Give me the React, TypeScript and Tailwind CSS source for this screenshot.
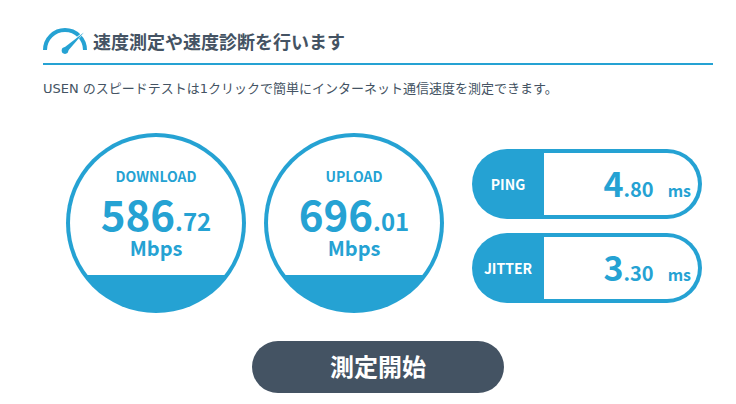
type Reading = { label: string; whole: string; fraction: string };

const speeds: Reading[] = [
  { label: 'DOWNLOAD', whole: '586', fraction: '.72' },
  { label: 'UPLOAD', whole: '696', fraction: '.01' },
];

const delays: Reading[] = [
  { label: 'PING', whole: '4', fraction: '.80' },
  { label: 'JITTER', whole: '3', fraction: '.30' },
];

function GaugeIcon() {
  return (
    <svg width="44" height="26" viewBox="0 0 44 26" aria-hidden="true" className="shrink-0">
      <path d="M2 22 A20 20 0 0 1 42 22" fill="none" stroke="#25a2d3" strokeWidth="4" />
      <path d="M20.4 20.8 L40.6 4.4 L23.8 24 Z" fill="#fff" stroke="#fff" strokeWidth="1.4" />
      <path d="M20 20.6 L40.8 4.6 L24 24 Z" fill="#25a2d3" />
      <circle cx="22" cy="22.6" r="3.3" fill="#25a2d3" />
    </svg>
  );
}

function SpeedDial({ label, whole, fraction }: Reading) {
  return (
    <section className="size-[180px] shrink-0 rounded-full bg-[#25a2d3] p-1 text-center">
      <div className="h-full overflow-hidden rounded-full">
        <div className="h-[138px] bg-white pt-[27px]">
          <h2 className="text-[14px] leading-6">{label}</h2>
          <p className="text-[42px] leading-[50px]">
            {whole}
            <span className="text-[24px] leading-none">{fraction}</span>
          </p>
          <p className="text-[20px] leading-5">Mbps</p>
        </div>
      </div>
    </section>
  );
}

function DelayPill({ label, whole, fraction }: Reading) {
  return (
    <section className="flex h-[70px] rounded-full bg-[#25a2d3] py-1 pr-1">
      <h2 className="flex w-[72px] shrink-0 items-center justify-center text-[14px] text-white">
        {label}
      </h2>
      <p className="flex flex-1 items-baseline justify-end rounded-r-full bg-white pt-[10px] pr-[7px] text-[34px] leading-10">
        {whole}
        <span className="text-[20px] leading-none">{fraction}</span>
        <span className="ml-[14px] text-[16px] leading-none">ms</span>
      </p>
    </section>
  );
}

export default function App() {
  return (
    <main className="bg-white pt-7 pr-[23px] pb-[11px] pl-[43px] font-['DejaVu_Sans','Noto_Sans_CJK_JP',sans-serif] text-[#445363]">
      <header className="flex h-[37px] items-start gap-[6px] border-b-2 border-[#25a2d3]">
        <GaugeIcon />
        <h1 className="text-[18px] leading-[30px] font-bold">速度測定や速度診断を行います</h1>
      </header>
      <p className="mt-3 text-[13px] leading-6">
        USEN のスピードテストは1クリックで簡単にインターネット通信速度を測定できます。
      </p>
      <div className="mt-8 flex justify-center gap-7 pl-3 font-['Noto_Sans_CJK_JP',sans-serif] font-bold text-[#25a2d3]">
        <div className="flex gap-[18px]">
          {speeds.map((s) => (
            <SpeedDial key={s.label} {...s} />
          ))}
        </div>
        <div className="flex w-[230px] flex-col gap-[14px] pt-4">
          {delays.map((d) => (
            <DelayPill key={d.label} {...d} />
          ))}
        </div>
      </div>
      <div className="mt-7 flex justify-center">
        <button
          type="button"
          className="h-[52px] w-[252px] rounded-full bg-[#445363] pt-[2px] text-[24px] leading-8 font-bold text-white"
        >
          測定開始
        </button>
      </div>
    </main>
  );
}
